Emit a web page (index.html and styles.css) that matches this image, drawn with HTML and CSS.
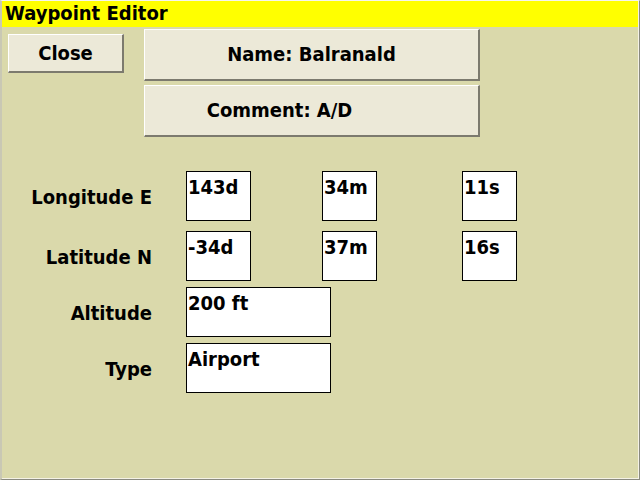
FILE: index.html
```html
<!DOCTYPE html>
<html>
<head>
<meta charset="utf-8">
<link rel="stylesheet" href="styles.css">
</head>
<body>
<div class="window">
  <div class="titlebar">Waypoint Editor</div>
  <div class="top">
    <div class="btn btn-close">Close</div>
    <div class="btn-col">
      <div class="btn btn-wide">Name: Balranald</div>
      <div class="btn btn-wide btn-comment">Comment: A/D</div>
    </div>
  </div>
  <div class="form">
    <div class="row row-first">
      <div class="label">Longitude E</div>
      <div class="field f-deg">143d</div>
      <div class="field f-small">34m</div>
      <div class="field f-small">11s</div>
    </div>
    <div class="row">
      <div class="label">Latitude N</div>
      <div class="field f-deg">-34d</div>
      <div class="field f-small">37m</div>
      <div class="field f-small">16s</div>
    </div>
    <div class="row">
      <div class="label">Altitude</div>
      <div class="field f-wide">200 ft</div>
    </div>
    <div class="row">
      <div class="label">Type</div>
      <div class="field f-wide">Airport</div>
    </div>
  </div>
</div>
</body>
</html>
```
FILE: styles.css
```css
html, body {
  margin: 0;
  padding: 0;
}
body {
  width: 640px;
  height: 480px;
  overflow: hidden;
  font-family: "DejaVu Sans Condensed", "DejaVu Sans", sans-serif;
  font-stretch: condensed;
  font-weight: bold;
  font-size: 20px;
  color: #000;
}
.window {
  box-sizing: border-box;
  width: 640px;
  height: 480px;
  background: #dad9ab;
  border-top: 1px solid #f6f5ee;
  border-left: 2px solid #c9c8b4;
  border-right: 1px solid #8a8a80;
  border-bottom: 1px solid #8a8a80;
  box-shadow: inset -1px -1px 0 #f4f2e6;
}
.titlebar {
  height: 26px;
  line-height: 24px;
  background: #ffff00;
  padding-left: 3px;
  margin-right: 1px;
}
.top {
  display: flex;
  gap: 20px;
  padding: 2px 0 0 6px;
}
.btn {
  box-sizing: border-box;
  background: #ece9d8;
  border-top: 1px solid #ffffff;
  border-left: 1px solid #ffffff;
  border-right: 2px solid #7c7a6e;
  border-bottom: 2px solid #7c7a6e;
  display: flex;
  align-items: center;
  justify-content: center;
}
.btn-close {
  width: 116px;
  height: 39px;
  margin-top: 5px;
}
.btn-col {
  display: flex;
  flex-direction: column;
  gap: 4px;
}
.btn-wide {
  width: 336px;
  height: 52px;
  padding-bottom: 2px;
}
.btn-comment {
  padding-right: 64px;
}
.form {
  margin-top: 34px;
  display: flex;
  flex-direction: column;
  gap: 6px;
}
.row {
  display: grid;
  grid-template-columns: 184px 136px 140px 55px;
  height: 50px;
  align-items: center;
}
.row-first {
  margin-bottom: 4px;
}
.label {
  text-align: right;
  padding-right: 34px;
  padding-top: 2px;
}
.field {
  box-sizing: border-box;
  height: 50px;
  background: #ffffff;
  border: 1px solid #000000;
  padding: 4px 1px 0;
  line-height: 23px;
  align-self: stretch;
  white-space: nowrap;
}
.f-deg { width: 65px; }
.f-small { width: 55px; }
.f-wide {
  width: 145px;
  grid-column: 2 / 4;
}
```
